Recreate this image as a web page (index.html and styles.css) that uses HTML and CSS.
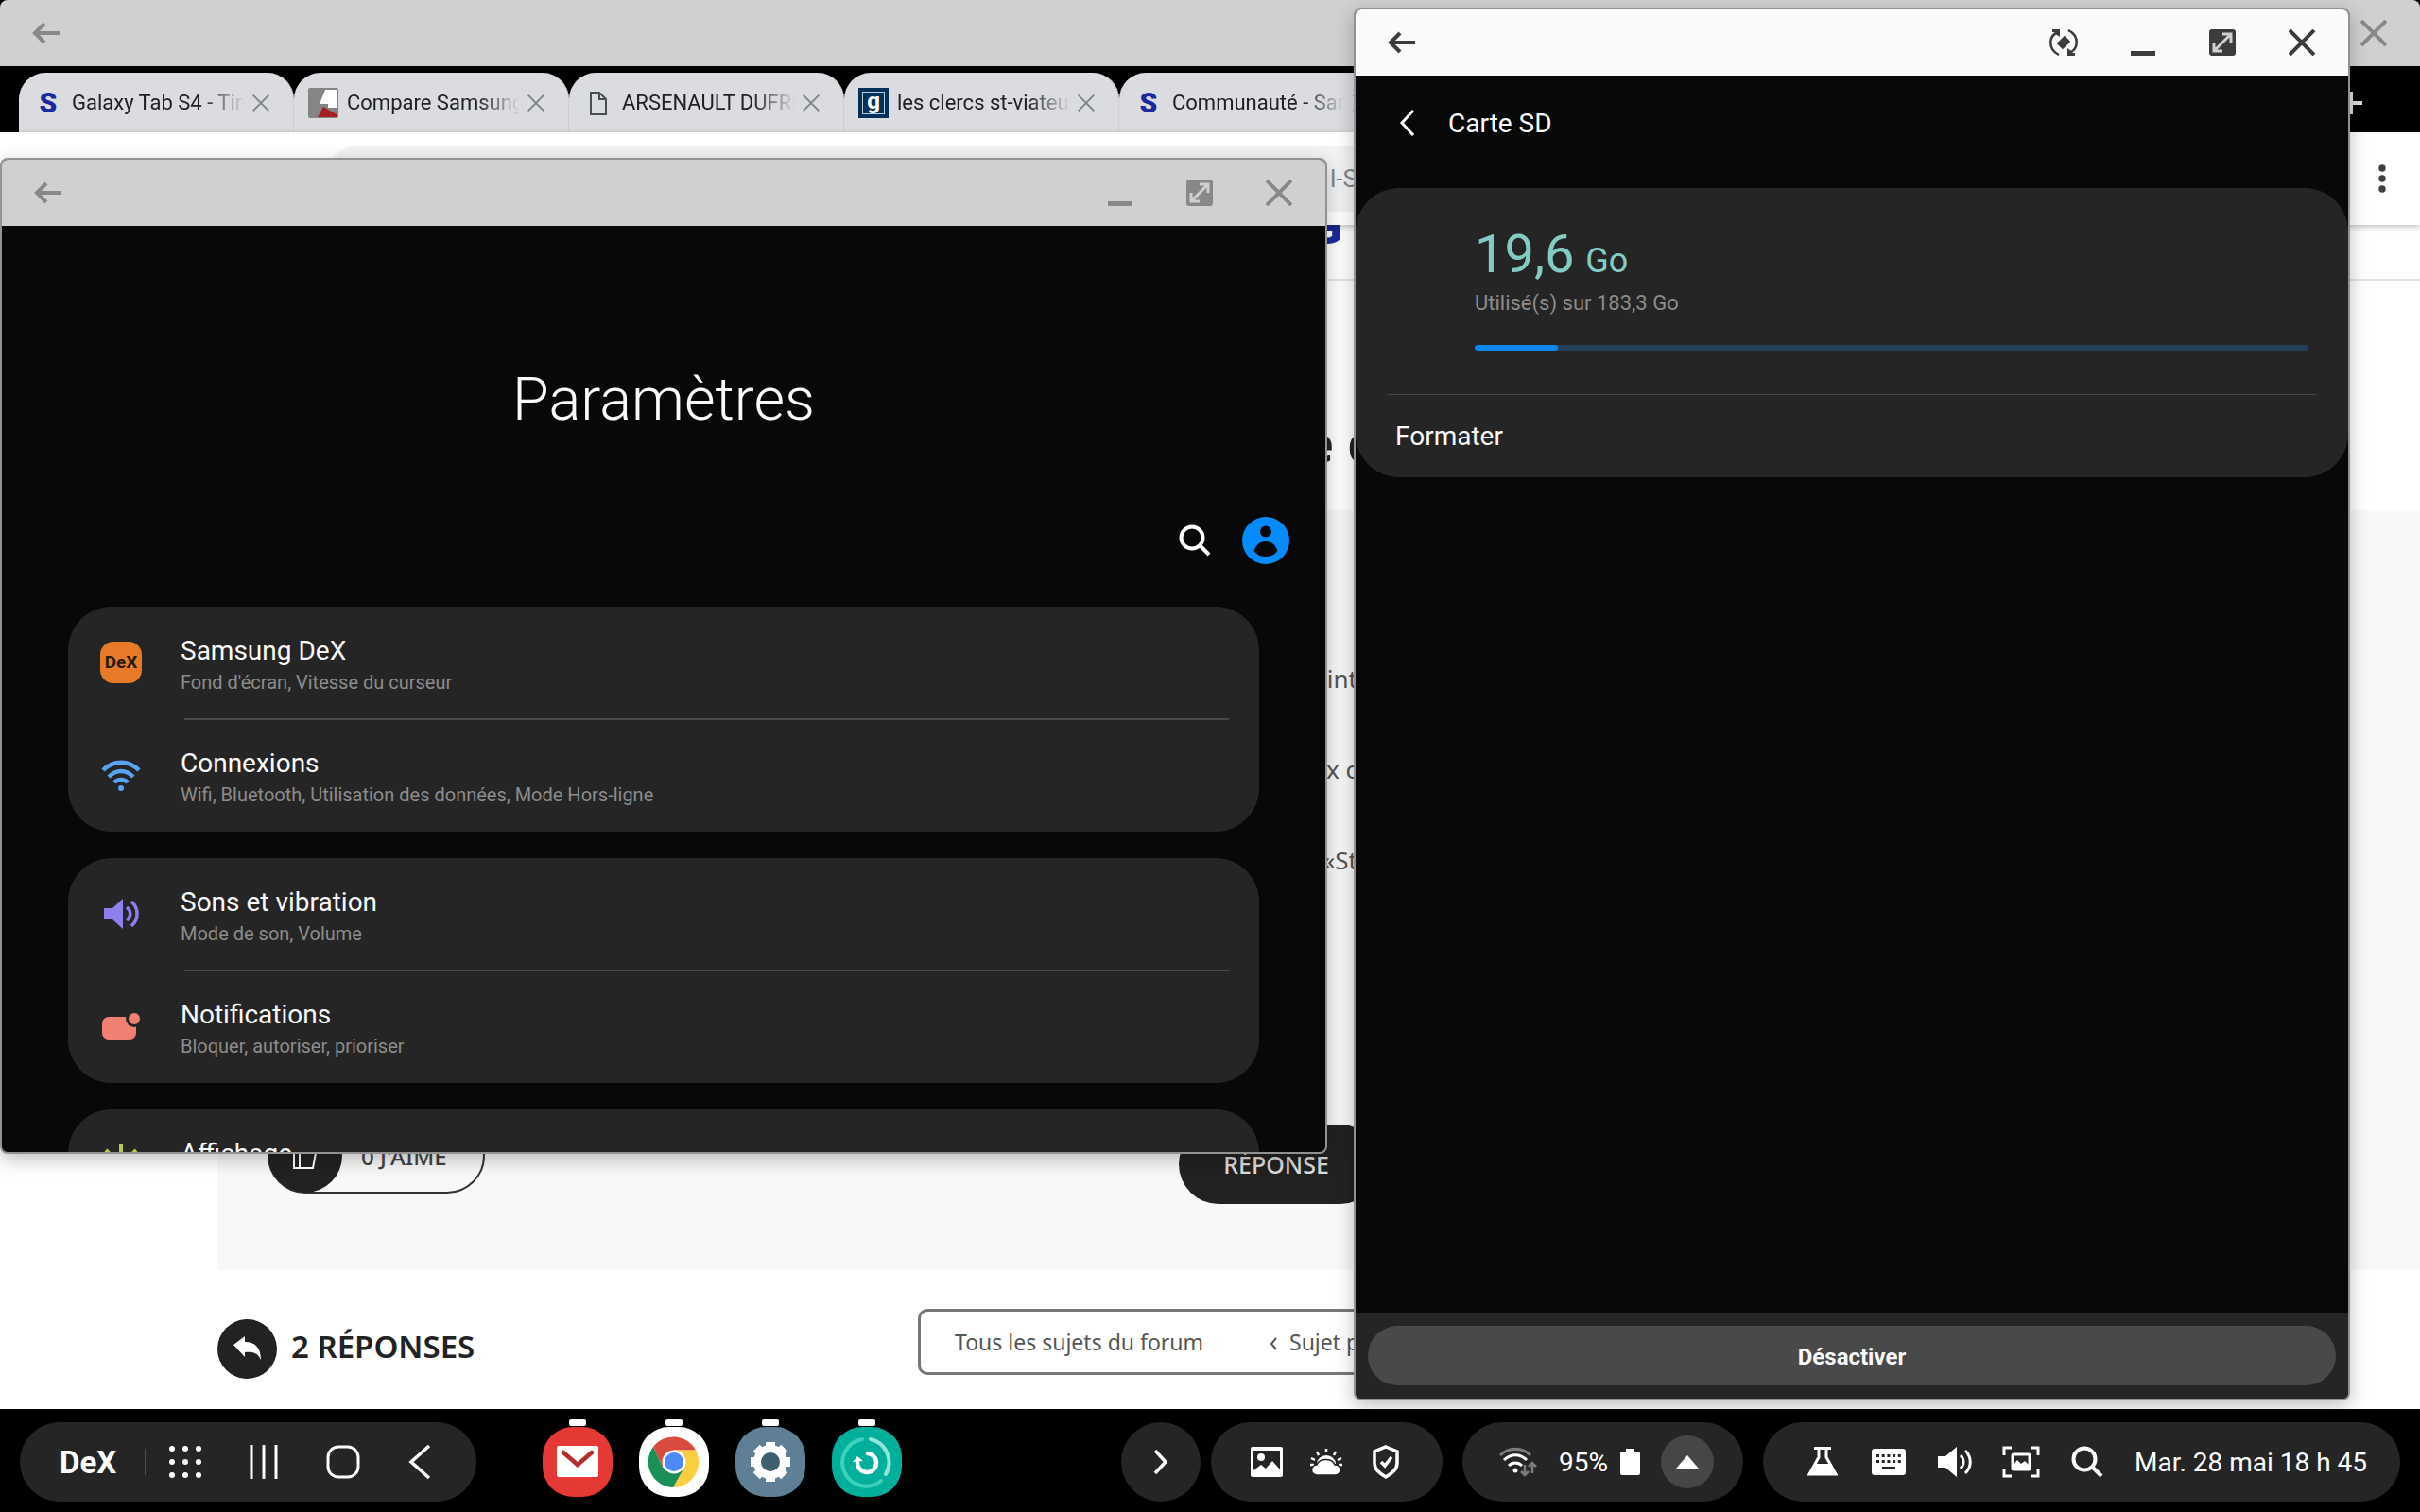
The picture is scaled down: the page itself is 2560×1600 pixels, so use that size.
FILE: index.html
```html
<!DOCTYPE html>
<html lang="fr">
  <head>
    <meta charset="UTF-8" />
    <meta name="viewport" content="width=device-width, initial-scale=1.0" />
    <title>Samsung DeX</title>
    <link rel="stylesheet" href="styles.css">
  </head>
  <body>
    <!-- shared icons -->
    <svg class="sprite" width="0" height="0">
      <symbol id="arrow" viewBox="0 0 30 24"><path d="M13 2 3 12l10 10M3 12h26" /></symbol>
      <symbol id="close" viewBox="0 0 28 28"><path d="M1 1l26 26M27 1L1 27" /></symbol>
      <symbol id="minimize" viewBox="0 0 28 28"><path d="M1 25.500h26" stroke-width="5" /></symbol>
      <symbol id="maximize" viewBox="0 0 28 28">
        <rect width="28" height="28" rx="3" fill="currentColor" stroke="none" />
        <path class="cut" d="M6 22 22 6M14 5h9v9M14 23H5v-9" />
      </symbol>
      <symbol id="search" viewBox="0 0 34 34"><circle cx="14" cy="14" r="11.500" /><path d="m22 22 10 10" /></symbol>
    </svg>

    <main class="desktop">
      <!-- browser -->
      <section class="browser">
        <header class="titlebar">
          <button class="control" aria-label="Retour"><svg class="arrow"><use href="#arrow" /></svg></button>
          <button class="control push" aria-label="Fermer"><svg class="win-icon"><use href="#close" /></svg></button>
        </header>
        <nav class="tabs">
          <div class="tab">
            <span class="favicon samsung">S</span>
            <span class="tab-title">Galaxy Tab S4 - Tiroir</span>
            <button class="tab-close" aria-label="Fermer l'onglet"><svg><use href="#close" /></svg></button>
          </div>
          <div class="tab">
            <svg class="favicon" viewBox="0 0 32 32">
              <rect width="32" height="32" rx="2" fill="#858585" />
              <path d="M18 2h12v19h-9v-4h-9z" fill="#fff" />
              <path d="M16 20l14 8v3H10z" fill="#a31f22" />
            </svg>
            <span class="tab-title">Compare Samsung</span>
            <button class="tab-close" aria-label="Fermer l'onglet"><svg><use href="#close" /></svg></button>
          </div>
          <div class="tab">
            <svg class="favicon" viewBox="0 0 32 32" fill="none" stroke="#4a4d51" stroke-width="2">
              <path d="M8 5h9l7 7v16H8zM17 5v7h7" />
            </svg>
            <span class="tab-title">ARSENAULT DUFRESNE</span>
            <button class="tab-close" aria-label="Fermer l'onglet"><svg><use href="#close" /></svg></button>
          </div>
          <div class="tab">
            <span class="favicon gdrive"><span>g</span></span>
            <span class="tab-title">les clercs st-viateur</span>
            <button class="tab-close" aria-label="Fermer l'onglet"><svg><use href="#close" /></svg></button>
          </div>
          <div class="tab">
            <span class="favicon samsung">S</span>
            <span class="tab-title">Communauté - Sam</span>
            <button class="tab-close" aria-label="Fermer l'onglet"><svg><use href="#close" /></svg></button>
          </div>
          <button class="new-tab" aria-label="Nouvel onglet"><svg viewBox="0 0 24 24"><path d="M12 0v24M0 12h24" /></svg></button>
        </nav>
        <div class="toolbar">
          <input class="url" type="text" aria-label="Adresse" value="l-S4" />
          <button class="menu" aria-label="Menu">
            <svg viewBox="0 0 8 30" width="8" height="30"><circle cx="4" cy="4" r="3.700" /><circle cx="4" cy="15" r="3.700" /><circle cx="4" cy="26" r="3.700" /></svg>
          </button>
        </div>
        <div class="page">
          <div class="site-header"><span class="logo">G</span></div>
          <h1 class="topic">e d</h1>
          <article class="post">
            <div class="post-body">
              <p>’int</p>
              <p>x c</p>
              <p>«St</p>
            </div>
            <div class="post-actions">
              <button class="like">
                <span class="like-icon">
                  <svg viewBox="0 0 32 32" width="32" height="32" fill="none" stroke="#fff" stroke-width="2"><path d="M4 13h6v16H4zM10 14l6-10c4 0 4 3 2 9h9l-3 16H10" /></svg>
                </span>
                0 J'AIME
              </button>
              <button class="reply">RÉPONSE</button>
            </div>
          </article>
          <div class="answers">
            <span class="answers-icon">
              <svg viewBox="0 0 32 28" width="32" height="28"><path d="M1 10 13 1v6c11 0 17 6 17 19-3-7-8-9-17-8v5z" fill="#fff" /></svg>
            </span>
            <h2>2 RÉPONSES</h2>
            <nav class="topics">
              <a href="#">Tous les sujets du forum</a>
              <a href="#"><svg viewBox="0 0 8 14" width="8" height="14"><path d="M7 1 2 7l5 6" /></svg>Sujet précédent</a>
            </nav>
          </div>
        </div>
      </section>

      <!-- settings -->
      <section class="window settings">
        <header class="titlebar">
          <button class="control" aria-label="Retour"><svg class="arrow"><use href="#arrow" /></svg></button>
          <button class="control push" aria-label="Réduire"><svg class="win-icon"><use href="#minimize" /></svg></button>
          <button class="control" aria-label="Agrandir"><svg class="win-icon"><use href="#maximize" /></svg></button>
          <button class="control" aria-label="Fermer"><svg class="win-icon"><use href="#close" /></svg></button>
        </header>
        <div class="settings-body">
          <h1>Paramètres</h1>
          <div class="settings-actions">
            <button aria-label="Rechercher"><svg class="search"><use href="#search" /></svg></button>
            <button aria-label="Compte">
              <svg viewBox="0 0 50 50" width="50" height="50">
                <circle cx="25" cy="25" r="25" fill="#068bff" />
                <circle cx="25" cy="15.500" r="6" fill="#080808" />
                <path d="M12.500 36c2-6 6-10 12.500-10s10.500 4 12.500 10c-3 4-7 6-12.500 6s-9.500-2-12.500-6z" fill="#080808" />
              </svg>
            </button>
          </div>
          <div class="card">
            <a class="row" href="#">
              <span class="dex-icon">DeX</span>
              <span class="row-text"><b>Samsung DeX</b><small>Fond d'écran, Vitesse du curseur</small></span>
            </a>
            <a class="row" href="#">
              <svg class="row-icon" viewBox="0 0 44 44" fill="none" stroke="#5aa2f2" stroke-width="4.500">
                <path d="M3 17c11-11 27-11 38 0M9 24c8-8 18-8 26 0M15 30c4-4 10-4 14 0" />
                <circle cx="22" cy="36" r="3" fill="#5aa2f2" stroke="none" />
              </svg>
              <span class="row-text"><b>Connexions</b><small>Wifi, Bluetooth, Utilisation des données, Mode Hors-ligne</small></span>
            </a>
          </div>
          <div class="card">
            <a class="row" href="#">
              <svg class="row-icon" viewBox="0 0 44 44" fill="#8d7ff0">
                <path d="M4 16h9L24 6v32L13 28H4z" />
                <path d="M28 15c5 4 5 10 0 14M33 9c8 7 8 19 0 26" fill="none" stroke="#8d7ff0" stroke-width="3.500" />
              </svg>
              <span class="row-text"><b>Sons et vibration</b><small>Mode de son, Volume</small></span>
            </a>
            <a class="row" href="#">
              <svg class="row-icon" viewBox="0 0 44 44" fill="#f08072">
                <rect x="2" y="12" width="36" height="24" rx="7" />
                <circle cx="36" cy="14" r="9" fill="#252525" />
                <circle cx="36" cy="14" r="6" />
              </svg>
              <span class="row-text"><b>Notifications</b><small>Bloquer, autoriser, prioriser</small></span>
            </a>
          </div>
          <div class="card">
            <a class="row" href="#">
              <svg class="row-icon" viewBox="0 0 44 44" fill="none" stroke="#b5cc4c" stroke-width="4">
                <path d="M22 0v9M6 6l6 6M38 6l-6 6" />
                <circle cx="22" cy="22" r="9" />
              </svg>
              <span class="row-text"><b>Affichage</b><small>Luminosité</small></span>
            </a>
          </div>
        </div>
      </section>

      <!-- SD card -->
      <section class="window storage">
        <header class="titlebar active">
          <button class="control" aria-label="Retour"><svg class="arrow"><use href="#arrow" /></svg></button>
          <button class="control push" aria-label="Pivoter">
            <svg viewBox="0 0 30 28" width="30" height="28">
              <path d="M10 27C-2 21-1 7 9 3M20 1c12 6 11 20 1 24" stroke-width="2.500" />
              <path d="M3 0h8v8L8 6 5 3H3zM27 28h-8v-8l3 2 3 3h2z" fill="currentColor" stroke="none" />
              <rect x="9" y="9.500" width="12" height="9" rx="1.500" transform="rotate(-45 15 14)" fill="currentColor" stroke="none" />
            </svg>
          </button>
          <button class="control" aria-label="Réduire"><svg class="win-icon"><use href="#minimize" /></svg></button>
          <button class="control" aria-label="Agrandir"><svg class="win-icon"><use href="#maximize" /></svg></button>
          <button class="control" aria-label="Fermer"><svg class="win-icon"><use href="#close" /></svg></button>
        </header>
        <div class="storage-head">
          <button aria-label="Retour"><svg viewBox="0 0 17 28" width="17" height="28"><path d="M15 1 3 14l12 13" /></svg></button>
          <h2>Carte SD</h2>
        </div>
        <div class="card">
          <div class="usage">
            <div class="amount">19,6 <span>Go</span></div>
            <label for="used">Utilisé(s) sur 183,3 Go</label>
            <progress id="used" value="10" max="100"></progress>
          </div>
          <button class="format">Formater</button>
        </div>
        <footer class="storage-foot"><button>Désactiver</button></footer>
      </section>
    </main>

    <footer class="taskbar">
      <div class="group nav-group">
        <button class="dex">DeX</button>
        <button class="nav first" aria-label="Applications">
          <svg viewBox="0 0 36 36" width="36" height="36" fill="#fff">
            <circle cx="4" cy="4" r="3" /><circle cx="18" cy="4" r="3" /><circle cx="32" cy="4" r="3" />
            <circle cx="4" cy="18" r="3" /><circle cx="18" cy="18" r="3" /><circle cx="32" cy="18" r="3" />
            <circle cx="4" cy="32" r="3" /><circle cx="18" cy="32" r="3" /><circle cx="32" cy="32" r="3" />
          </svg>
        </button>
        <button class="nav" aria-label="Récents"><svg viewBox="0 0 36 36" width="36" height="36" stroke="#fff" stroke-width="3"><path d="M5 0v36M18 0v36M31 0v36" /></svg></button>
        <button class="nav" aria-label="Accueil"><svg viewBox="0 0 36 36" width="36" height="36" fill="none" stroke="#fff" stroke-width="3"><rect x="2" y="2" width="32" height="32" rx="11" /></svg></button>
        <button class="nav" aria-label="Retour"><svg viewBox="0 0 36 36" width="36" height="36" fill="none" stroke="#fff" stroke-width="3.500"><path d="M25 1 6 18l19 17" /></svg></button>
      </div>

      <div class="apps">
        <button class="app mail" aria-label="Courriel">
          <svg viewBox="0 0 74 74"><rect x="15" y="20" width="44" height="33" rx="2" fill="#fff" /><path d="M22 27l15 13 15-13" fill="none" stroke="#b32d2d" stroke-width="4.500" stroke-linecap="round" /></svg>
        </button>
        <button class="app chrome" aria-label="Chrome">
          <svg viewBox="0 0 74 74">
            <path d="M15 21A27 27 0 0 1 60 24.500H37L25 43z" fill="#d94a41" />
            <path d="M37 24.500H60A27 27 0 0 1 36 64L48 43z" fill="#ffcd41" />
            <path d="M15 21L25 43H48L36 64A27 27 0 0 1 15 21z" fill="#1a9058" />
            <circle cx="37" cy="37" r="12.500" fill="#fff" />
            <circle cx="37" cy="37" r="10" fill="#4c8bf5" />
          </svg>
        </button>
        <button class="app gear" aria-label="Paramètres">
          <svg viewBox="0 0 74 74">
            <circle cx="37" cy="37" r="18" fill="#fff" />
            <path d="M37 16v42M16 37h42M22.200 22.200l29.600 29.600M51.800 22.200 22.200 51.800" stroke="#fff" stroke-width="10" />
            <circle cx="37" cy="37" r="10" fill="#3f5f70" />
          </svg>
        </button>
        <button class="app care" aria-label="Maintenance">
          <svg viewBox="0 0 74 74" fill="none" stroke-linecap="round">
            <path d="M41 13a25 25 0 0 1 16 37" stroke="#8fe8d8" stroke-width="4" />
            <path d="M52 57A25 25 0 1 1 32 13" stroke="#3fd0b9" stroke-width="4" />
            <path d="M38 28a10 10 0 1 1-11 10" stroke="#fff" stroke-width="4.500" />
            <path d="M22 37l5-6 6 5z" fill="#fff" />
          </svg>
        </button>
      </div>

      <button class="group more" aria-label="Afficher plus">
        <svg viewBox="0 0 16 26" width="16" height="26" fill="none" stroke="#fff" stroke-width="3.500"><path d="M2 1l11 12L2 25" /></svg>
      </button>
      <div class="group notices">
        <button aria-label="Image">
          <svg viewBox="0 0 34 32" width="34" height="32"><rect width="34" height="32" rx="2" fill="#fff" /><path d="M3 4h28v20l-8-9-7 8-5-4-8 6z" fill="#252525" /><circle cx="11" cy="11" r="4" fill="#fff" /></svg>
        </button>
        <button aria-label="Météo">
          <svg viewBox="0 0 34 30" width="34" height="30" fill="#fff">
            <path d="M17 1v4M7 4l2 4M27 4l-2 4M1 11l4 2M33 11l-4 2M0 18h4M34 18h-4" stroke="#fff" stroke-width="2.500" />
            <path d="M7 17a10 9 0 0 1 20 0z" />
            <path d="M7 29a5.500 5.500 0 0 1 0-11 10 8 0 0 1 19 0 5.500 5.500 0 0 1 1 11z" stroke="#252525" stroke-width="1.500" />
          </svg>
        </button>
        <button aria-label="Sécurité">
          <svg viewBox="0 0 30 36" width="30" height="36" fill="none" stroke="#fff" stroke-width="3.500"><path d="M15 2 27 7v12c0 7-5 11-12 15C8 30 3 26 3 19V7zM10 18l4 4 7-9" /></svg>
        </button>
      </div>
      <div class="group status">
        <svg class="wifi" viewBox="0 0 40 32" width="40" height="32" fill="none" stroke="#fff" stroke-width="3">
          <path d="M1 9c9-9 23-9 32 0" stroke="#7c7c7c" />
          <path d="M5 14c7-7 17-7 24 0M10 20c4-4 10-4 14 0" />
          <circle cx="17" cy="25" r="2.500" fill="#fff" stroke="none" />
          <path d="M27 19v11M23 26l4 4 4-4M35 28V17M31 21l4-4 4 4" stroke="#7c7c7c" stroke-width="2.500" />
        </svg>
        <span class="level">95%</span>
        <svg class="battery" viewBox="0 0 21 28" width="21" height="28" fill="#fff"><path d="M6 0h9v3h4a2 2 0 0 1 2 2v21a2 2 0 0 1-2 2H2a2 2 0 0 1-2-2V5a2 2 0 0 1 2-2h4z" /></svg>
        <button class="expand" aria-label="Panneau rapide"><svg viewBox="0 0 24 14" width="24" height="14"><path d="M12 0l12 14H0z" fill="#fff" /></svg></button>
      </div>
      <div class="group tray">
        <button aria-label="Labs">
          <svg viewBox="0 0 32 32" width="32" height="32"><path d="M7 1.500h18M12 2v9L2 29h28L20 11V2" fill="none" stroke="#fff" stroke-width="3" /><path d="M8 18h16l6 12H2z" fill="#fff" /></svg>
        </button>
        <button aria-label="Clavier">
          <svg viewBox="0 0 36 28" width="36" height="28"><rect width="36" height="28" rx="3" fill="#fff" /><path d="M5 7.500h26M5 13.500h26" stroke="#252525" stroke-width="3" stroke-dasharray="3 2.700" /><path d="M11 20.500h14" stroke="#252525" stroke-width="3" /></svg>
        </button>
        <button aria-label="Volume">
          <svg viewBox="0 0 36 34" width="36" height="34" fill="#fff"><path d="M0 11h8L20 1v32L8 23H0z" /><path d="M24 10c4 4 4 10 0 14M29 5c7 7 7 17 0 24" fill="none" stroke="#fff" stroke-width="3" /></svg>
        </button>
        <button aria-label="Capture">
          <svg viewBox="0 0 40 34" width="40" height="34" fill="none" stroke="#fff" stroke-width="3"><path d="M10 2H2v8M30 2h8v8M10 32H2v-8M30 32h8v-8" /><rect x="11" y="9" width="18" height="16" rx="1" /><path d="M11 21l5-6 4 4 4-3 5 5v4H11z" fill="#fff" stroke="none" /></svg>
        </button>
        <button aria-label="Rechercher"><svg class="search"><use href="#search" /></svg></button>
        <time>Mar. 28 mai 18 h 45</time>
      </div>
    </footer>
  </body>
</html>
```
FILE: styles.css
```css
* {
  box-sizing: border-box;
}
body {
  display: flex;
  flex-direction: column;
  height: 100vh;
  margin: 0;
  background: #000;
  font-family: Roboto, sans-serif;
  overflow: hidden;
}
h1,
h2,
p {
  margin: 0;
  font-weight: 400;
}
button {
  display: flex;
  align-items: center;
  justify-content: center;
  padding: 0;
  border: none;
  background: none;
  color: inherit;
  font-family: inherit;
  cursor: pointer;
}
a {
  color: inherit;
  text-decoration: none;
}
.sprite {
  position: absolute;
}
.desktop {
  position: relative;
  flex: 1;
  min-height: 0;
  overflow: hidden;
}

/* title bars */
.titlebar {
  display: flex;
  flex: none;
  height: 70px;
  padding: 0 7px;
  background: #d0d0d0;
  color: #888;
}
.titlebar.active {
  background: #fafafa;
  color: #3c3c3c;
}
.control {
  width: 84px;
}
.control svg {
  fill: none;
  stroke: currentColor;
  stroke-width: 4;
}
.control .arrow {
  width: 30px;
  height: 24px;
}
.win-icon {
  width: 28px;
  height: 28px;
}
.cut {
  stroke: #d0d0d0;
  stroke-width: 3;
}
.push {
  margin-left: auto;
}

/* browser */
.browser {
  display: flex;
  flex-direction: column;
  height: 100%;
  background: #fff;
}
.browser > .titlebar {
  border-radius: 8px 8px 0 0;
  box-shadow: 0 -10px 0 10px #000;
}
.tabs {
  display: flex;
  flex: none;
  height: 70px;
  padding: 7px 61px 0 20px;
  background: #000;
}
.tab {
  display: flex;
  align-items: center;
  width: 291px;
  height: 63px;
  padding: 0 17px 0 15px;
  border-right: 1px solid #cdcfd3;
  border-radius: 28px 28px 0 0;
  background: #dadce0;
}
.favicon {
  flex: none;
  width: 32px;
  height: 32px;
  margin-right: 9px;
  text-align: center;
}
.samsung {
  color: #1a2a9c;
  font-size: 30px;
  font-weight: 900;
  line-height: 32px;
}
.gdrive {
  padding: 4px;
  background: #04305a;
}
.gdrive span {
  display: block;
  height: 24px;
  border: 1px solid #b8c8d6;
  color: #fff;
  font-size: 24px;
  font-weight: 700;
  line-height: 18px;
}
.tab-title {
  flex: 1;
  overflow: hidden;
  color: #202124;
  font-size: 22px;
  line-height: 30px;
  white-space: nowrap;
  -webkit-mask-image: linear-gradient(to right, #000 75%, transparent);
  mask-image: linear-gradient(to right, #000 75%, transparent);
}
.tab-close {
  width: 34px;
}
.tab-close svg {
  width: 18px;
  height: 18px;
  stroke: #808388;
  stroke-width: 3;
}
.new-tab {
  margin-left: auto;
}
.new-tab svg {
  width: 24px;
  height: 24px;
  stroke: #ddd;
  stroke-width: 4;
}
.toolbar {
  position: relative;
  display: flex;
  flex: none;
  gap: 86px;
  height: 98px;
  padding: 14px 36px 14px 344px;
  background: #fff;
  box-shadow: 0 2px 6px rgba(0, 0, 0, 0.25);
}
.url {
  flex: 1;
  padding: 0 0 0 1063px;
  border: none;
  border-radius: 35px;
  background: #f1f3f4;
  color: #80868b;
  font-family: inherit;
  font-size: 26px;
}
.menu {
  fill: #3c4043;
}
.page {
  display: flex;
  flex: 1;
  flex-direction: column;
  min-height: 0;
  color: #222;
  font-family: "Noto Sans", sans-serif;
}
.site-header {
  flex: none;
  height: 59px;
  padding-left: 1386px;
  border-bottom: 2px solid #e4e4e4;
}
.logo {
  display: block;
  color: #1a2a9c;
  font-family: Roboto, sans-serif;
  font-size: 50px;
  font-weight: 900;
  line-height: 6px;
}
.topic {
  flex: none;
  height: 243px;
  padding: 142px 0 0 1379px;
  font-size: 54px;
  font-weight: 700;
  line-height: 58px;
}
.post {
  display: flex;
  flex: none;
  flex-direction: column;
  justify-content: space-between;
  height: 804px;
  margin-left: 230px;
  padding: 158px 0 70px;
  background: #f8f8f8;
}
.post-body {
  width: 1206px;
  color: #555;
  font-size: 26px;
  line-height: 40px;
  text-align: right;
}
.post-body p + p {
  margin-top: 56px;
}
.post-actions {
  display: flex;
  align-items: flex-end;
  justify-content: space-between;
  width: 1230px;
  padding-left: 53px;
}
.like {
  gap: 21px;
  width: 230px;
  height: 80px;
  margin-bottom: 11px;
  border: 2px solid #333;
  border-radius: 40px;
  justify-content: flex-start;
  color: #444;
  font-size: 24px;
  font-weight: 500;
}
.like-icon {
  display: flex;
  align-items: center;
  justify-content: center;
  width: 78px;
  height: 78px;
  margin: -1px;
  border-radius: 50%;
  background: #222;
}
.reply {
  width: 213px;
  height: 84px;
  border-radius: 42px;
  padding-right: 7px;
  background: #222;
  color: #ddd;
  font-size: 25px;
  font-weight: 500;
}
.answers {
  display: flex;
  align-items: center;
  padding: 41px 0 0 230px;
}
.answers-icon {
  display: flex;
  align-items: center;
  justify-content: center;
  width: 63px;
  height: 63px;
  margin-right: 15px;
  border-radius: 50%;
  background: #222;
}
.answers h2 {
  width: 663px;
  padding-bottom: 6px;
  font-size: 33px;
  font-weight: 600;
}
.topics {
  display: flex;
  align-items: center;
  gap: 70px;
  width: 1000px;
  height: 70px;
  margin-bottom: 14px;
  padding-left: 36px;
  border: 3px solid #777;
  border-radius: 10px;
  color: #555;
  font-size: 23px;
  white-space: nowrap;
}
.topics svg {
  margin-right: 13px;
  fill: none;
  stroke: #555;
  stroke-width: 2;
}

/* floating windows */
.window {
  position: absolute;
  display: flex;
  flex-direction: column;
  border: 2px solid #929292;
  border-radius: 8px;
  background: #080808;
  box-shadow: 0 6px 20px rgba(0, 0, 0, 0.25);
  color: #fafafa;
  overflow: hidden;
}
.settings {
  top: 167px;
  right: 1156px;
  bottom: 270px;
  left: 0;
}
.storage {
  top: 8px;
  right: 74px;
  bottom: 9px;
  width: 1054px;
}
.card {
  border-radius: 46px;
  background: #252525;
}

/* settings */
.settings-body {
  padding: 144px 70px 0;
}
.settings h1 {
  font-size: 63px;
  font-weight: 300;
  line-height: 80px;
  text-align: center;
}
.settings-actions {
  display: flex;
  justify-content: flex-end;
  gap: 33px;
  height: 50px;
  margin: 84px -32px 45px 0;
}
.search {
  width: 34px;
  height: 34px;
  fill: none;
  stroke: #fff;
  stroke-width: 4;
}
.settings .card {
  margin-bottom: 28px;
}
.row {
  display: flex;
  align-items: center;
  gap: 41px;
  height: 118px;
  padding-left: 34px;
}
.row + .row {
  height: 120px;
  background: linear-gradient(#4a4a4a, #4a4a4a) 123px 0 / calc(100% - 155px) 2px no-repeat;
}
.row-icon,
.dex-icon {
  width: 44px;
  height: 44px;
}
.dex-icon {
  border-radius: 14px;
  background: #e67a28;
  color: #2a1c10;
  font-size: 19px;
  font-weight: 700;
  line-height: 44px;
  text-align: center;
}
.row-text {
  display: flex;
  flex-direction: column;
  padding-top: 8px;
}
.row-text b {
  font-size: 28px;
  font-weight: 400;
  line-height: 34px;
}
.row-text small {
  color: #8c8c8c;
  font-size: 20px;
  line-height: 32px;
}

/* SD card */
.storage .cut {
  stroke: #fff;
}
.storage-head {
  display: flex;
  align-items: center;
  gap: 35px;
  height: 100px;
  margin-bottom: 19px;
  padding-left: 46px;
}
.storage-head svg {
  fill: none;
  stroke: #fff;
  stroke-width: 3;
}
.storage-head h2 {
  font-size: 28px;
}
.usage {
  padding: 40px 42px 46px 126px;
}
.amount {
  color: #84ccc3;
  font-size: 56px;
  line-height: 60px;
}
.amount span {
  margin-left: -2px;
  font-size: 36px;
  line-height: 36px;
}
.usage label {
  display: block;
  margin: 8px 0 30px;
  color: #8c8c8c;
  font-size: 22px;
  line-height: 28px;
}
progress {
  display: block;
  width: 100%;
  height: 6px;
  border: none;
  border-radius: 3px;
  background: #24405a;
  appearance: none;
  overflow: hidden;
}
progress::-webkit-progress-bar {
  background: #24405a;
}
progress::-webkit-progress-value {
  border-radius: 3px;
  background: #0f86ee;
}
.format {
  justify-content: flex-start;
  width: 982px;
  height: 88px;
  margin: 0 34px;
  padding-left: 8px;
  border-top: 1px solid #464646;
  font-size: 28px;
}
.storage-foot {
  margin-top: auto;
  padding: 14px 13px;
  background: #252525;
}
.storage-foot button {
  width: 100%;
  height: 63px;
  padding-top: 2px;
  border-radius: 32px;
  background: #494949;
  font-size: 24px;
  font-weight: 700;
}

/* taskbar */
.taskbar {
  display: flex;
  align-items: center;
  flex: none;
  height: 109px;
  padding: 3px 21px 0;
  color: #fff;
}
.group {
  display: flex;
  align-items: center;
  height: 84px;
  border-radius: 42px;
  background: #252525;
}
.nav-group {
  padding: 0 15px 0 42px;
}
.dex {
  width: 90px;
  justify-content: flex-start;
  font-size: 33px;
  font-weight: 700;
}
.nav {
  width: 84px;
}
.nav.first {
  border-left: 1px solid #4c4c4c;
  height: 28px;
}
.apps {
  display: flex;
  gap: 28px;
  margin: 0 auto 0 70px;
}
.app {
  position: relative;
  width: 74px;
  height: 74px;
  border-radius: 32px;
}
.app::before {
  content: "";
  position: absolute;
  top: -8px;
  left: 28px;
  width: 18px;
  height: 7px;
  border-radius: 2px;
  background: #fff;
}
.app svg {
  width: 74px;
  height: 74px;
}
.mail {
  background: #e53935;
}
.chrome {
  background: #fff;
}
.gear {
  background: #5f7f96;
}
.care {
  background: #00b09b;
}
.more {
  width: 84px;
  margin-right: 11px;
}
.notices {
  margin-right: 21px;
  padding: 0 28px;
}
.notices button {
  width: 63px;
}
.status {
  margin-right: 21px;
  padding: 0 31px 0 39px;
}
.level {
  width: 63px;
  margin-left: 23px;
  font-size: 28px;
}
.battery {
  margin: 0 22px 0 2px;
}
.expand {
  width: 56px;
  height: 56px;
  border-radius: 50%;
  background: #464646;
}
.tray {
  padding: 0 35px 0 28px;
}
.tray button {
  width: 70px;
}
.tray time {
  margin-left: 15px;
  font-size: 28px;
}
```
